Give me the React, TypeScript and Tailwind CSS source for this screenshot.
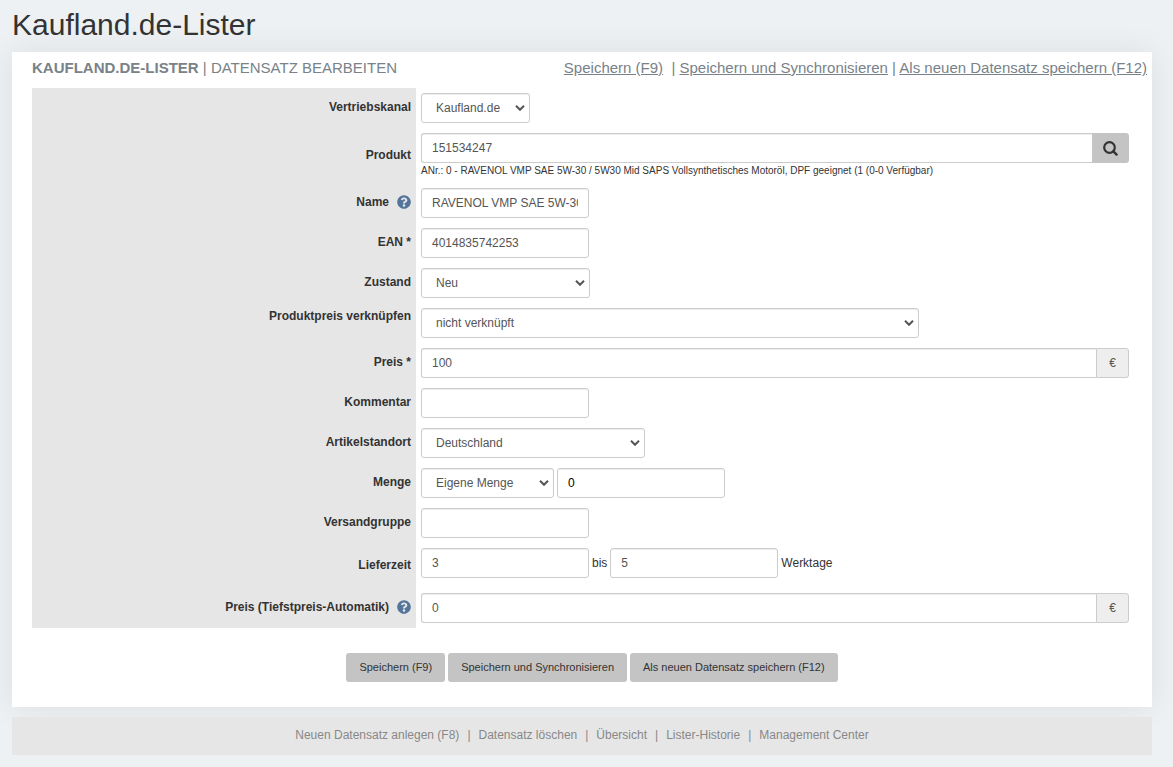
import type { ReactNode } from "react"
import { FaQuestionCircle } from "react-icons/fa"

const control =
  "h-[30px] border border-[#ccc] rounded-[3px] bg-white text-xs text-[#555] shadow-[inset_0_1px_1px_rgba(0,0,0,0.075)]"
const inputClass = `${control} px-[10px] w-[168px]`
const groupInputClass = `${control} px-[10px] flex-1 min-w-0 rounded-r-none border-r-0`

const actions = ["Speichern (F9)", "Speichern und Synchronisieren", "Als neuen Datensatz speichern (F12)"]

const footerLinks = [
  "Neuen Datensatz anlegen (F8)",
  "Datensatz löschen",
  "Übersicht",
  "Lister-Historie",
  "Management Center",
]

type RowProps = {
  id: string
  label: string
  help?: boolean
  top?: boolean
  className?: string
  children: ReactNode
}

function Row({ id, label, help, top, className = "", children }: RowProps) {
  return (
    <div className="grid grid-cols-[384fr_716fr]">
      <div
        className={`flex justify-end bg-[#e6e6e6] pr-[5px] pb-0.5 text-xs font-bold text-[#333] ${
          top ? "items-start pt-[5px]" : "items-center"
        }`}
      >
        <label htmlFor={id}>{label}</label>
        {help && <FaQuestionCircle className="ml-2 h-[14px] w-[14px] text-[#54749b]" />}
      </div>
      <div className={`py-[5px] pl-[5px] pr-[3px] ${className}`}>{children}</div>
    </div>
  )
}

function Select({ id, width, value }: { id: string; width: string; value: string }) {
  return (
    <span className={`relative inline-flex ${width}`}>
      <select id={id} className={`${control} w-full appearance-none pr-5 pl-[14px]`}>
        <option>{value}</option>
      </select>
      <svg
        viewBox="0 0 10 6"
        className="pointer-events-none absolute top-3 right-[5px] h-[6px] w-[10px]"
        fill="none"
        stroke="#555"
        strokeWidth="2"
      >
        <path d="M1 .8 5 4.8 9 .8" />
      </svg>
    </span>
  )
}

function EuroInput({ id, value }: { id: string; value: string }) {
  return (
    <div className="flex">
      <input id={id} defaultValue={value} className={groupInputClass} />
      <span className="flex h-[30px] w-[33px] items-center justify-center rounded-r-[3px] border border-[#ccc] bg-[#eee] text-xs text-[#555]">
        €
      </span>
    </div>
  )
}

function SearchIcon() {
  return (
    <svg viewBox="0 0 15 15" className="mr-px h-[15px] w-[15px]" fill="none" stroke="#333">
      <circle cx="6.5" cy="6.5" r="5.3" strokeWidth="2.2" />
      <path d="M10.4 10.4 13.6 13.6" strokeWidth="2.4" strokeLinecap="round" />
    </svg>
  )
}

export default function App() {
  return (
    <div className="min-h-screen bg-[#edf1f4] pb-3 pl-3 pr-[21px] font-['Liberation_Sans',Arial,sans-serif] text-xs text-[#333]">
      <h1 className="pt-2 pb-[11px] text-[30px] leading-[33px]">Kaufland.de-Lister</h1>

      <main className="bg-white pb-[25px] shadow-[0_0_30px_rgba(0,0,0,0.08)]">
        <header className="flex h-9 items-center justify-between pl-5 pr-[5px] pb-1 text-[15px] text-[#788288]">
          <h2 className="uppercase">
            <b>Kaufland.de-Lister</b> | Datensatz bearbeiten
          </h2>
          <nav>
            <a href="#" className="underline">{actions[0]}</a>
            {"\u00a0 | "}
            <a href="#" className="underline">{actions[1]}</a>
            {" | "}
            <a href="#" className="underline">{actions[2]}</a>
          </nav>
        </header>

        <form className="px-5" onSubmit={(e) => e.preventDefault()}>
          <Row id="kanal" label="Vertriebskanal" className="flex">
            <Select id="kanal" width="w-[109px]" value="Kaufland.de" />
          </Row>
          <Row id="produkt" label="Produkt">
            <div className="flex">
              <input id="produkt" defaultValue="151534247" className={groupInputClass} />
              <button
                type="button"
                aria-label="Suchen"
                className="flex h-[30px] w-[37px] items-center justify-center rounded-r-[3px] bg-[#c4c4c4]"
              >
                <SearchIcon />
              </button>
            </div>
            <p className="text-[10px] leading-[15px]">
              ANr.: 0 - RAVENOL VMP SAE 5W-30 / 5W30 Mid SAPS Vollsynthetisches Motoröl, DPF geeignet (1 (0-0
              Verfügbar)
            </p>
          </Row>
          <Row id="name" label="Name" help>
            <input id="name" defaultValue="RAVENOL VMP SAE 5W-30 / 5W30 Mid SAPS" className={inputClass} />
          </Row>
          <Row id="ean" label="EAN *">
            <input id="ean" defaultValue="4014835742253" className={inputClass} />
          </Row>
          <Row id="zustand" label="Zustand" className="flex">
            <Select id="zustand" width="w-[169px]" value="Neu" />
          </Row>
          <Row id="verknuepfen" label="Produktpreis verknüpfen" top className="flex">
            <Select id="verknuepfen" width="w-[498px]" value="nicht verknüpft" />
          </Row>
          <Row id="preis" label="Preis *">
            <EuroInput id="preis" value="100" />
          </Row>
          <Row id="kommentar" label="Kommentar">
            <input id="kommentar" className={inputClass} />
          </Row>
          <Row id="standort" label="Artikelstandort" className="flex">
            <Select id="standort" width="w-[224px]" value="Deutschland" />
          </Row>
          <Row id="menge" label="Menge" className="flex gap-[3px]">
            <Select id="menge" width="w-[133px]" value="Eigene Menge" />
            <input aria-label="Eigene Menge" defaultValue="0" className={`${inputClass} text-black!`} />
          </Row>
          <Row id="versand" label="Versandgruppe">
            <input id="versand" className={inputClass} />
          </Row>
          <Row id="lieferzeit" label="Lieferzeit" className="flex h-[45px] gap-[3px] leading-[30px]">
            <input id="lieferzeit" defaultValue="3" className={inputClass} />
            <label htmlFor="lieferzeit-bis">bis</label>
            <input id="lieferzeit-bis" defaultValue="5" className={inputClass} />
            <span>Werktage</span>
          </Row>
          <Row id="tiefstpreis" label="Preis (Tiefstpreis-Automatik)" help>
            <EuroInput id="tiefstpreis" value="0" />
          </Row>

          <div className="flex justify-center gap-[3px] pt-[25px] pl-5">
            {actions.map((action) => (
              <button key={action} type="submit" className="h-[29px] rounded-[3px] bg-[#c4c4c4] px-[13px] text-[11px]">
                {action}
              </button>
            ))}
          </div>
        </form>
      </main>

      <footer className="mt-[10px] flex h-[38px] items-center justify-center bg-[#e6e6e6] pb-0.5 text-[#888]">
        {footerLinks.map((link, index) => (
          <span key={link}>
            {index > 0 && <span className="px-2">|</span>}
            <a href="#">{link}</a>
          </span>
        ))}
      </footer>
    </div>
  )
}
